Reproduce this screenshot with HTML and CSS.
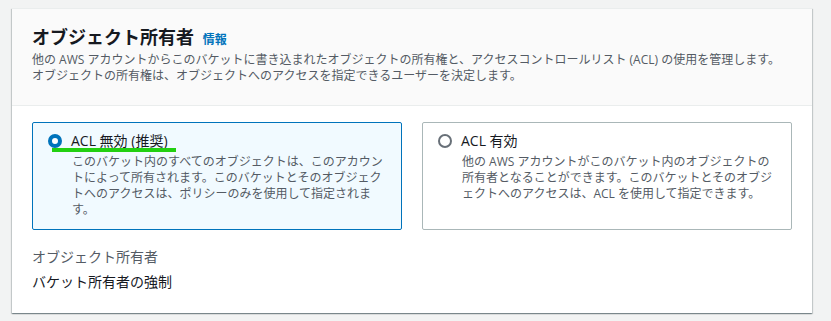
FILE: index.html
```html
<!DOCTYPE html>
<html>
<head>
<meta charset="UTF-8">
<title>オブジェクト所有者</title>
<link rel="stylesheet" href="styles.css">
</head>
<body>
<div class="card">
  <div class="card-head">
    <h2 class="title">オブジェクト所有者 <a class="info" href="#">情報</a></h2>
    <p class="desc">他の AWS アカウントからこのバケットに書き込まれたオブジェクトの所有権と、アクセスコントロールリスト (ACL) の使用を管理します。<br>オブジェクトの所有権は、オブジェクトへのアクセスを指定できるユーザーを決定します。</p>
  </div>
  <div class="card-body">
    <div class="tiles">
      <div class="tile selected">
        <div class="tile-row">
          <span class="radio on"></span>
          <span class="tile-label">ACL 無効 (推奨)</span>
        </div>
        <span class="mark"></span>
        <p class="tile-desc">このバケット内のすべてのオブジェクトは、このアカウントによって所有されます。このバケットとそのオブジェクトへのアクセスは、ポリシーのみを使用して指定されます。</p>
      </div>
      <div class="tile">
        <div class="tile-row">
          <span class="radio"></span>
          <span class="tile-label">ACL 有効</span>
        </div>
        <p class="tile-desc">他の AWS アカウントがこのバケット内のオブジェクトの所有者となることができます。このバケットとそのオブジェクトへのアクセスは、ACL を使用して指定できます。</p>
      </div>
    </div>
    <div class="summary">
      <div class="sum-key">オブジェクト所有者</div>
      <div class="sum-val">バケット所有者の強制</div>
    </div>
  </div>
</div>
</body>
</html>
```

FILE: styles.css
```css
body {
  margin: 0;
  background: #f2f3f3;
  font-family: "Open Sans", "Noto Sans CJK JP", sans-serif;
  color: #16191f;
}
.card {
  margin: 8px 0 9px 12px;
  width: 800px;
  background: #fff;
  border-top: 1px solid #eaeded;
  box-shadow: 0 1px 1px 0 rgba(0,28,36,.3), 1px 1px 1px 0 rgba(0,28,36,.15), -1px 1px 1px 0 rgba(0,28,36,.15);
}
.card-head {
  background: #fafafa;
  border-bottom: 1px solid #eaeded;
  padding: 17px 20px 21px;
}
.title {
  margin: 0;
  font-size: 18px;
  line-height: 22px;
  font-weight: bold;
}
.info {
  margin-left: 4px;
  font-size: 12px;
  line-height: 14px;
  color: #0073bb;
  text-decoration: none;
  font-weight: bold;
}
.desc {
  margin: 4px 0 0;
  font-size: 12px;
  line-height: 16px;
  color: #545b64;
}
.card-body {
  padding: 16px 20px 20px;
}
.tiles {
  display: grid;
  grid-template-columns: 1fr 1fr;
  gap: 20px;
}
.tile {
  position: relative;
  border: 1px solid #aab7b8;
  border-radius: 2px;
  padding: 7px 15px 11px;
}
.tile.selected {
  border-color: #0073bb;
  background: #f1faff;
}
.tile-row {
  display: flex;
  align-items: center;
  gap: 9px;
}
.tile-label {
  font-size: 14px;
  line-height: 22px;
}
.radio {
  box-sizing: border-box;
  width: 14px;
  height: 14px;
  border-radius: 50%;
  border: 2px solid #687078;
  background: #fff;
}
.radio.on {
  border: 4px solid #0073bb;
}
.mark {
  position: absolute;
  left: 19px;
  top: 25px;
  width: 124px;
  height: 4px;
  background: #22d011;
}
.tile-desc {
  margin: 2px 0 0 24px;
  font-size: 12px;
  line-height: 16px;
  color: #545b64;
}
.summary {
  margin-top: 16px;
  font-size: 14px;
  line-height: 22px;
}
.sum-key {
  color: #545b64;
}
.sum-val {
  margin-top: 3px;
}
```
